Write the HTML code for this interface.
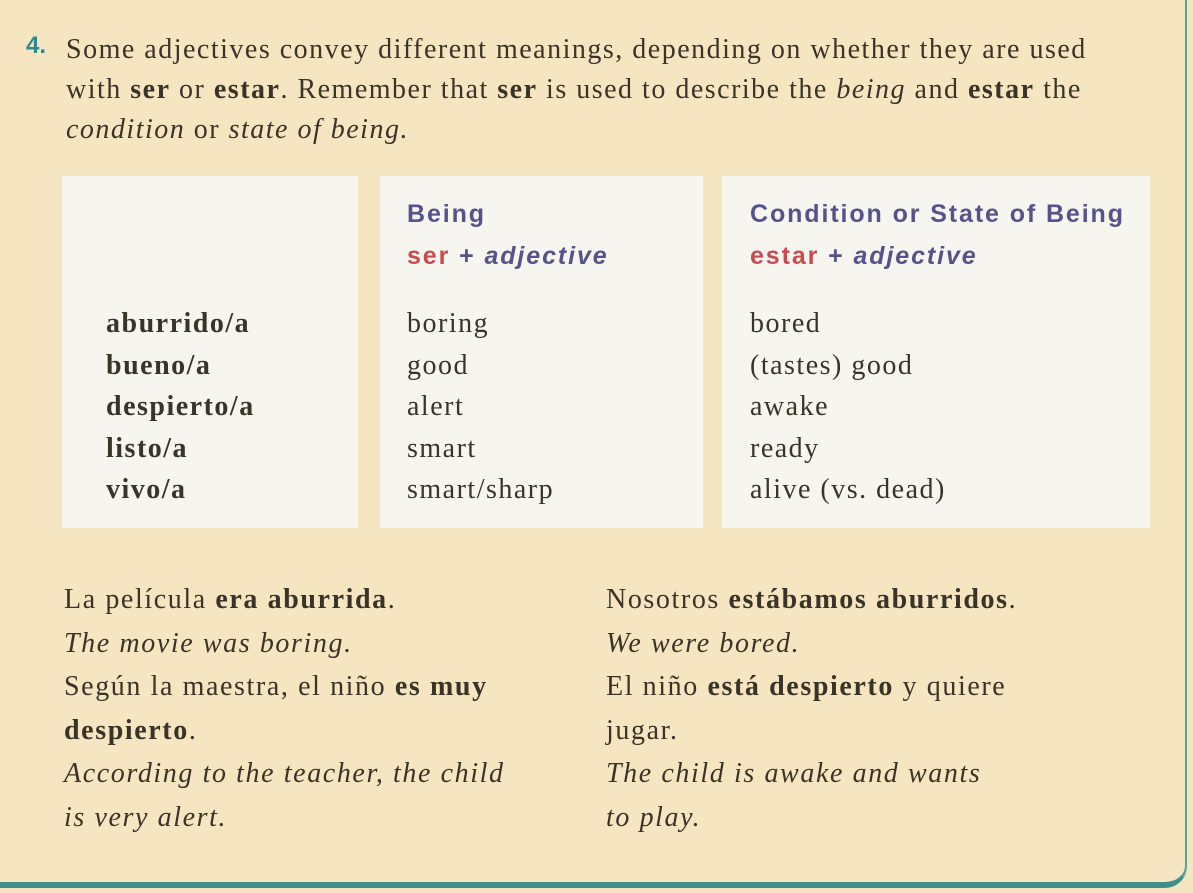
<!DOCTYPE html>
<html><head><meta charset="utf-8"><style>
html,body{margin:0;padding:0}
body{width:1193px;height:893px;overflow:hidden;background:#f6e5c1;position:relative;font-family:"Liberation Serif",serif;color:#3a3328}
.frame{position:absolute;left:-10px;top:-10px;width:1197px;height:898px;border-right:2px solid #5aa39c;border-bottom:6px solid #3f8f88;border-bottom-right-radius:22px;box-sizing:border-box}
.t{position:absolute;white-space:nowrap;font-size:28px;letter-spacing:1.5px}
.card{position:absolute;background:#f6f5f0;top:176px;height:352px}
.h{position:absolute;font-family:"Liberation Sans",sans-serif;font-size:25px;font-weight:bold;letter-spacing:1.9px;color:#55538a;white-space:nowrap}
.red{color:#c94a50}
.col{position:absolute;font-size:28px;letter-spacing:1.5px;line-height:41.5px;white-space:nowrap}
.ex{position:absolute;font-size:28px;letter-spacing:1.6px;line-height:43.5px;white-space:nowrap}
</style></head><body>
<div class="frame"></div>
<div class="t" style="left:26px;top:32px;font-family:'Liberation Sans',sans-serif;font-weight:bold;color:#2f8a8f;font-size:24px;letter-spacing:0">4.</div>
<div class="t" style="left:66px;top:30px;line-height:40px">Some adjectives convey different meanings, depending on whether they are used<br>with <b>ser</b> or <b>estar</b>. Remember that <b>ser</b> is used to describe the <i>being</i> and <b>estar</b> the<br><i>condition</i> or <i>state of being.</i></div>
<div class="card" style="left:62px;width:296px"></div>
<div class="card" style="left:380px;width:323px"></div>
<div class="card" style="left:722px;width:428px"></div>
<div class="h" style="left:407px;top:200px">Being</div>
<div class="h" style="left:407px;top:242px"><span class="red">ser</span> + <i>adjective</i></div>
<div class="h" style="left:750px;top:200px">Condition or State of Being</div>
<div class="h" style="left:750px;top:242px"><span class="red">estar</span> + <i>adjective</i></div>
<div class="col" style="left:106px;top:303px;font-weight:bold">aburrido/a<br>bueno/a<br>despierto/a<br>listo/a<br>vivo/a</div>
<div class="col" style="left:407px;top:303px">boring<br>good<br>alert<br>smart<br>smart/sharp</div>
<div class="col" style="left:750px;top:303px">bored<br>(tastes) good<br>awake<br>ready<br>alive (vs. dead)</div>
<div class="ex" style="left:64px;top:578px">La película <b>era aburrida</b>.<br><i>The movie was boring.</i><br>Según la maestra, el niño <b>es muy</b><br><b>despierto</b>.<br><i>According to the teacher, the child</i><br><i>is very alert.</i></div>
<div class="ex" style="left:606px;top:578px">Nosotros <b>estábamos aburridos</b>.<br><i>We were bored.</i><br>El niño <b>está despierto</b> y quiere<br>jugar.<br><i>The child is awake and wants</i><br><i>to play.</i></div>
</body></html>
